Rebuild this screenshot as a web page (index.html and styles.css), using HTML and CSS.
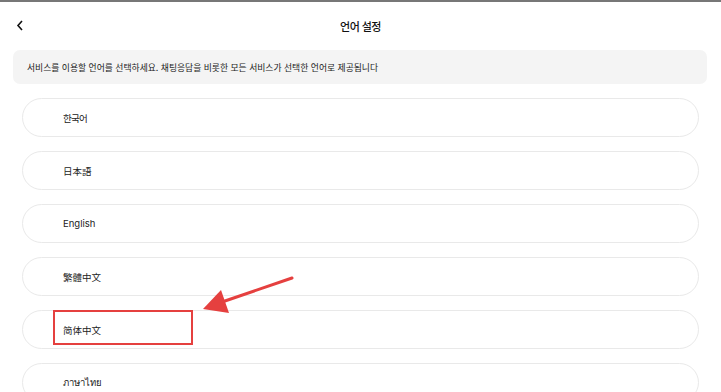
FILE: index.html
```html
<!DOCTYPE html>
<html lang="ko">
<head>
<meta charset="utf-8">
<title>언어 설정</title>
<link rel="stylesheet" href="styles.css">
</head>
<body>
<div class="page">
  <header class="header">
    <button class="back" aria-label="back">
      <svg width="10" height="14" viewBox="0 0 10 14"><polyline points="6,2 2,6.5 6,11" fill="none" stroke="#111" stroke-width="1.6"/></svg>
    </button>
    <h1 class="title">언어 설정</h1>
  </header>
  <div class="notice">서비스를 이용할 언어를 선택하세요. 채팅응답을 비롯한 모든 서비스가 선택한 언어로 제공됩니다</div>
  <ul class="langs">
    <li class="lang ko">한국어</li>
    <li class="lang">日本語</li>
    <li class="lang">English</li>
    <li class="lang">繁體中文</li>
    <li class="lang">简体中文</li>
    <li class="lang">ภาษาไทย</li>
  </ul>
  <div class="mark-box"></div>
  <svg class="mark-arrow" width="721" height="392" viewBox="0 0 721 392">
    <line x1="292" y1="278" x2="222" y2="302" stroke="#e5403f" stroke-width="3" stroke-linecap="round"/>
    <polygon points="203,309 221,290 229,313" fill="#e5403f"/>
  </svg>
</div>
</body>
</html>
```
FILE: styles.css
```css
* { box-sizing: border-box; }
html, body { margin: 0; padding: 0; background: #fff; }
body {
  width: 721px;
  height: 392px;
  overflow: hidden;
  font-family: Inter, "Noto Sans CJK KR", "Noto Sans CJK SC", "Noto Sans", sans-serif;
  color: #222;
}
.page {
  position: relative;
  border-top: 2px solid #777;
  height: 392px;
}
.header {
  position: relative;
  height: 48px;
  display: flex;
  align-items: center;
  justify-content: center;
}
.back {
  position: absolute;
  left: 16px;
  top: 17px;
  padding: 0;
  border: 0;
  background: none;
  display: flex;
}
.title {
  margin: 0;
  font-size: 11px;
  font-weight: 500;
  letter-spacing: -0.5px;
  color: #111;
}
.notice {
  margin: 0 14px 0 13px;
  height: 34px;
  background: #f4f4f4;
  border-radius: 7px;
  padding-left: 14px;
  display: flex;
  align-items: center;
  font-size: 8.8px;
  letter-spacing: 0;
  color: #1a1a1a;
}
.langs {
  list-style: none;
  margin: 14px 22px 0 22px;
  padding: 0;
  display: flex;
  flex-direction: column;
  gap: 14px;
}
.lang {
  height: 39px;
  border: 1px solid #e9e9e9;
  border-radius: 20px;
  padding-left: 40px;
  display: flex;
  align-items: center;
  font-size: 9.5px;
  color: #222;
}
.lang.ko { letter-spacing: -0.8px; }
.mark-box {
  position: absolute;
  left: 53px;
  top: 308px;
  width: 140px;
  height: 35px;
  border: 2.5px solid #e5403f;
}
.mark-arrow {
  position: absolute;
  left: 0;
  top: -2px;
  pointer-events: none;
}
```
